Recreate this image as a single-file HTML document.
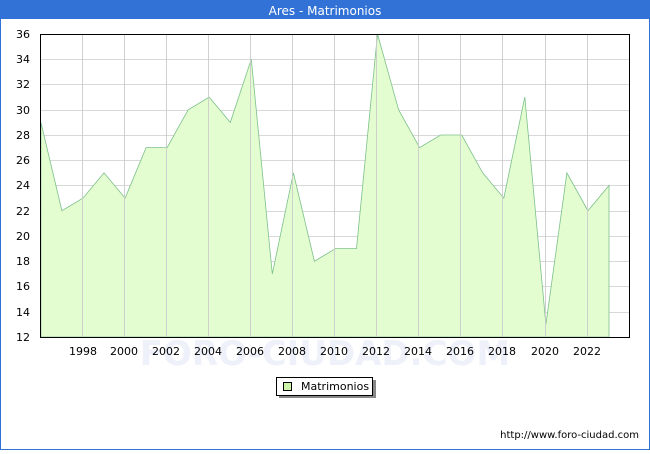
<!DOCTYPE html>
<html><head><meta charset="utf-8"><style>
body{margin:0;width:650px;height:450px;overflow:hidden;background:#fff;font-family:"DejaVu Sans","Liberation Sans",sans-serif}
</style></head><body>
<svg width="650" height="450" xmlns="http://www.w3.org/2000/svg" font-family="DejaVu Sans, Liberation Sans, sans-serif">
<rect x="0" y="0" width="650" height="450" fill="#fff"/>
<rect x="0.5" y="0.5" width="649" height="449" fill="none" stroke="#3272d6"/>
<rect x="0" y="0" width="650" height="19" fill="#3272d6"/>
<text x="325" y="15" font-size="12" fill="#fff" text-anchor="middle">Ares - Matrimonios</text>
<g stroke="#d8d8d8" stroke-width="1">
<line x1="40" x2="630" y1="59.5" y2="59.5"/><line x1="40" x2="630" y1="84.5" y2="84.5"/><line x1="40" x2="630" y1="110.5" y2="110.5"/><line x1="40" x2="630" y1="135.5" y2="135.5"/><line x1="40" x2="630" y1="160.5" y2="160.5"/><line x1="40" x2="630" y1="185.5" y2="185.5"/><line x1="40" x2="630" y1="211.5" y2="211.5"/><line x1="40" x2="630" y1="236.5" y2="236.5"/><line x1="40" x2="630" y1="261.5" y2="261.5"/><line x1="40" x2="630" y1="286.5" y2="286.5"/><line x1="40" x2="630" y1="312.5" y2="312.5"/>
</g>
<polygon fill="#e4fdd0" stroke="#7cc08a" stroke-width="0.8" points="40.9,337 40.9,122.4 61.9,210.75 83,198.1 104,172.9 125.1,198.1 146.1,147.6 167.1,147.6 188.2,109.75 209.2,97.1 230.3,122.4 251.3,59.25 272.3,273.9 293.4,172.9 314.4,261.25 335.5,248.6 356.5,248.6 377.5,34 398.6,109.75 419.6,147.6 440.7,135 461.7,135 482.7,172.9 503.8,198.1 524.8,97.1 545.9,324.4 566.9,172.9 587.9,210.75 609,185.5 609,337"/>
<g stroke="#cccccc" stroke-width="1" opacity="0.9">
<line x1="82.5" x2="82.5" y1="35" y2="337"/><line x1="124.5" x2="124.5" y1="35" y2="337"/><line x1="166.5" x2="166.5" y1="35" y2="337"/><line x1="208.5" x2="208.5" y1="35" y2="337"/><line x1="250.5" x2="250.5" y1="35" y2="337"/><line x1="292.5" x2="292.5" y1="35" y2="337"/><line x1="334.5" x2="334.5" y1="35" y2="337"/><line x1="376.5" x2="376.5" y1="35" y2="337"/><line x1="418.5" x2="418.5" y1="35" y2="337"/><line x1="460.5" x2="460.5" y1="35" y2="337"/><line x1="502.5" x2="502.5" y1="35" y2="337"/><line x1="545.5" x2="545.5" y1="35" y2="337"/><line x1="587.5" x2="587.5" y1="35" y2="337"/>
</g>
<text x="325" y="365" font-size="34" fill="#eef0fa" text-anchor="middle" font-weight="bold">FORO-CIUDAD.COM</text>
<rect x="40.5" y="34.5" width="589" height="303" fill="none" stroke="#000"/>
<g font-size="11" fill="#000" text-anchor="end">
<text x="30" y="38">36</text><text x="30" y="63">34</text><text x="30" y="88">32</text><text x="30" y="114">30</text><text x="30" y="139">28</text><text x="30" y="164">26</text><text x="30" y="189">24</text><text x="30" y="215">22</text><text x="30" y="240">20</text><text x="30" y="265">18</text><text x="30" y="290">16</text><text x="30" y="316">14</text><text x="30" y="341">12</text>
</g>
<g font-size="11" fill="#000" text-anchor="middle">
<text x="83" y="355">1998</text><text x="124" y="355">2000</text><text x="166" y="355">2002</text><text x="208" y="355">2004</text><text x="250" y="355">2006</text><text x="292" y="355">2008</text><text x="334" y="355">2010</text><text x="376" y="355">2012</text><text x="418" y="355">2014</text><text x="460" y="355">2016</text><text x="502" y="355">2018</text><text x="545" y="355">2020</text><text x="587" y="355">2022</text>
</g>
<rect x="279" y="380" width="97" height="18" fill="#888"/>
<rect x="276.5" y="377.5" width="96" height="18" fill="#fff" stroke="#000"/>
<rect x="283.5" y="382.5" width="8" height="8" fill="#ccf5a8" stroke="#000"/>
<text x="301" y="390" font-size="11" fill="#000">Matrimonios</text>
<text x="639" y="438" font-size="10" fill="#000" text-anchor="end">http://www.foro-ciudad.com</text>
</svg>
</body></html>
